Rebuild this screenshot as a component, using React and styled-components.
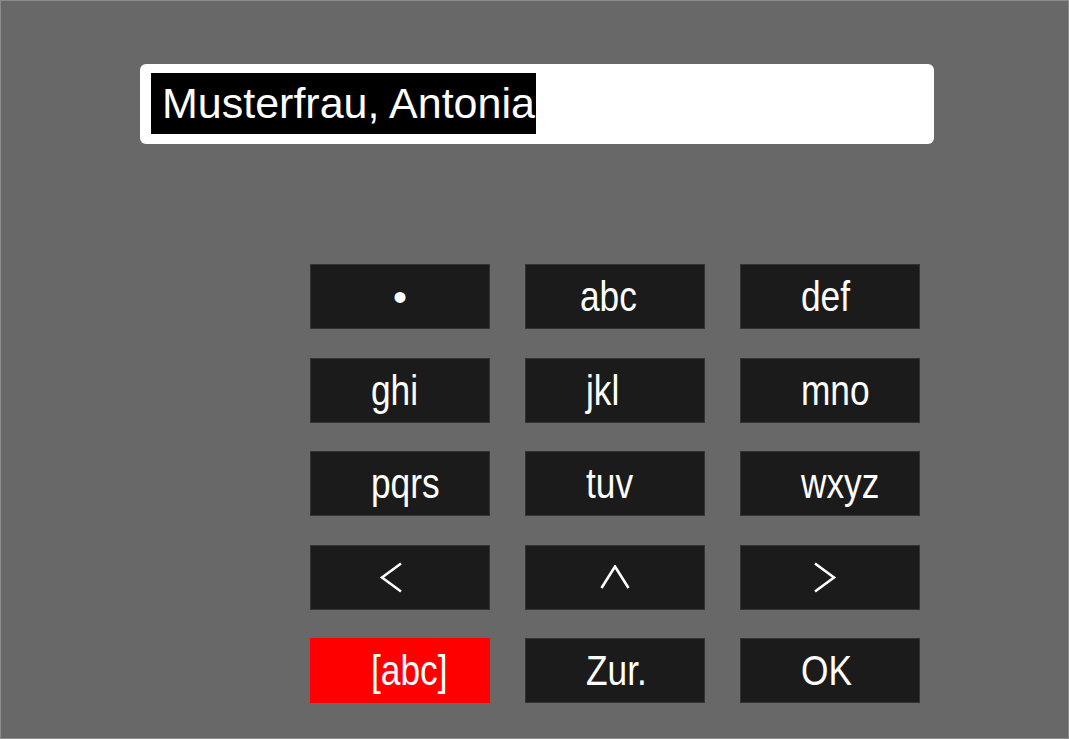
import React from "react";
import styled, { createGlobalStyle } from "styled-components";

const COLORS = {
  page: "#686868",
  frame: "#8c8c8c",
  key: "#1b1b1b",
  keyEdge: "#333333",
  active: "#ff0000",
  white: "#ffffff",
  black: "#000000",
};

const KEYS = [
  { dot: true },
  { label: "abc", indent: 54 },
  { label: "def" },
  { label: "ghi" },
  { label: "jkl" },
  { label: "mno" },
  { label: "pqrs" },
  { label: "tuv" },
  { label: "wxyz" },
  { icon: "left", dx: -9 },
  { icon: "up", dx: 0 },
  { icon: "right", dx: -5 },
  { label: "[abc]", active: true },
  { label: "Zur." },
  { label: "OK" },
];

const Chevron = ({ dir }) => {
  const paths = {
    left: { w: 24, h: 31, d: "M22 1.5 L3 15.5 L22 29.5" },
    right: { w: 24, h: 31, d: "M2 1.5 L21 15.5 L2 29.5" },
    up: { w: 30, h: 24, d: "M1.5 23 L15 1.5 L28.5 23" },
  };
  const p = paths[dir];
  return (
    <svg width={p.w} height={p.h} viewBox={`0 0 ${p.w} ${p.h}`} fill="none">
      <path d={p.d} stroke={COLORS.white} strokeWidth="2.6" />
    </svg>
  );
};

const App = () => {
  return (
    <>
      <GlobalStyle />
      <Screen>
        <InputBox>
          <Selection>Musterfrau, Antonia</Selection>
        </InputBox>
        <Keypad>
          {KEYS.map((k, i) => {
            const centered = k.icon || k.dot;
            return (
              <Key
                key={i}
                $active={k.active}
                $center={centered}
                $indent={k.indent ?? 60}
                $dx={k.dx ?? 0}
              >
                {k.icon && <Chevron dir={k.icon} />}
                {k.dot && <Dot>•</Dot>}
                {k.label && <Label>{k.label}</Label>}
              </Key>
            );
          })}
        </Keypad>
      </Screen>
    </>
  );
};

const GlobalStyle = createGlobalStyle`
  html, body {
    margin: 0;
    padding: 0;
    background: ${COLORS.page};
  }
  * {
    box-sizing: border-box;
  }
`;

const Screen = styled.div`
  width: 1069px;
  height: 739px;
  background: ${COLORS.page};
  border: 1px solid ${COLORS.frame};
  padding: 63px 0 0 139px;
  font-family: "Liberation Sans", Arial, sans-serif;
  overflow: hidden;
`;

const InputBox = styled.div`
  width: 794px;
  height: 80px;
  background: ${COLORS.white};
  border-radius: 6px;
  padding: 9px 11px;
`;

const Selection = styled.span`
  display: inline-block;
  height: 61px;
  line-height: 61px;
  background: ${COLORS.black};
  color: ${COLORS.white};
  font-size: 43px;
  padding: 0 1px 0 11px;
`;

const Keypad = styled.div`
  display: grid;
  grid-template-columns: repeat(3, 180px);
  grid-auto-rows: 65px;
  column-gap: 35px;
  row-gap: 28.5px;
  margin: 120px 0 0 170px;
`;

const Key = styled.div`
  display: flex;
  align-items: center;
  justify-content: ${(p) => (p.$center ? "center" : "flex-start")};
  padding-left: ${(p) => (p.$center ? 0 : p.$indent)}px;
  background: ${(p) => (p.$active ? COLORS.active : COLORS.key)};
  border: 1px solid ${(p) => (p.$active ? COLORS.active : COLORS.keyEdge)};
  color: ${COLORS.white};
  font-size: 43px;
  line-height: 1;
  white-space: nowrap;

  & > svg {
    transform: translateX(${(p) => p.$dx}px);
  }
`;

/* no narrow face installed: condense the regular one */
const Label = styled.span`
  display: inline-block;
  font-family: "Liberation Sans Narrow", "Liberation Sans", Arial, sans-serif;
  transform: scaleX(0.82);
  transform-origin: left center;
`;

const Dot = styled.span`
  font-size: 40px;
`;

export default App;
